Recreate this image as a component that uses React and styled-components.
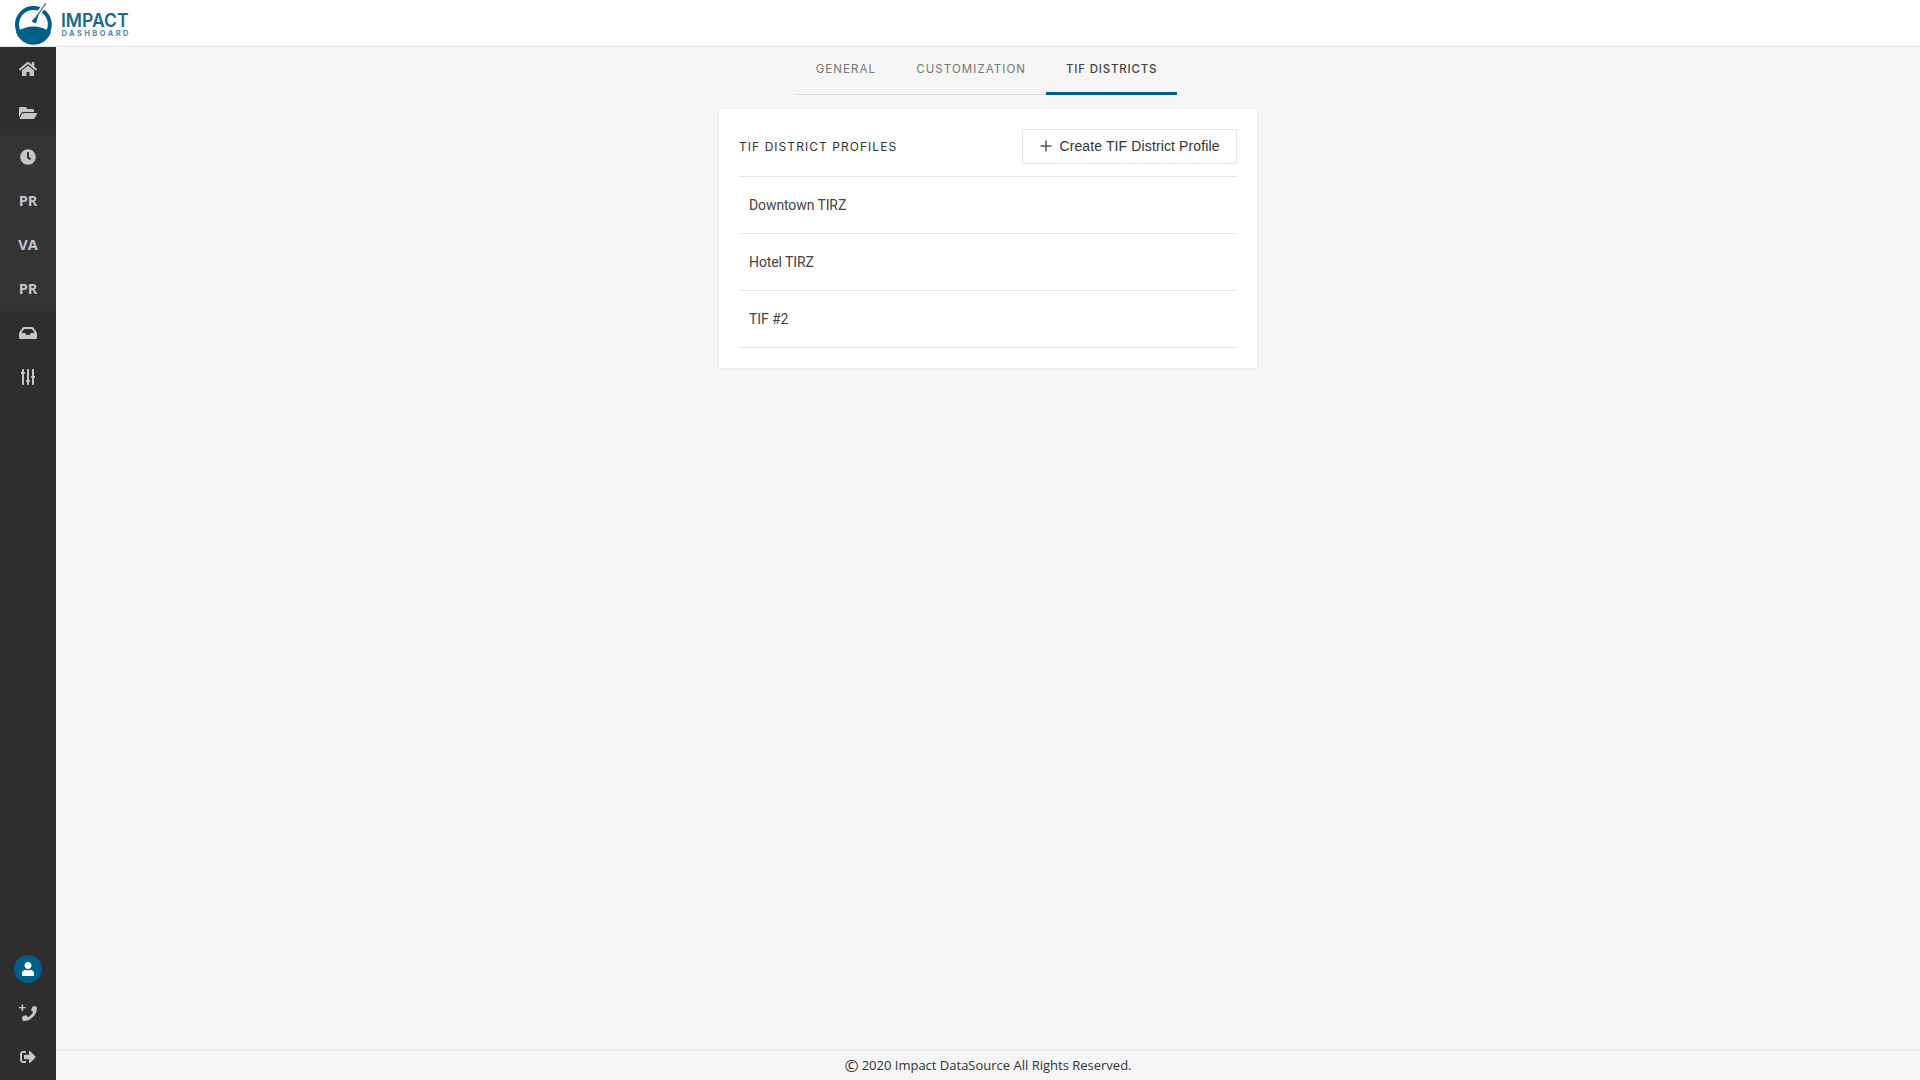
import React from "react";
import styled, { createGlobalStyle } from "styled-components";
import { FaHome, FaFolderOpen, FaClock, FaInbox, FaSlidersH, FaUser, FaPhoneAlt, FaSignOutAlt } from "react-icons/fa";

const GlobalStyle = createGlobalStyle`
  html, body {
    margin: 0;
    padding: 0;
    background: #f5f5f5;
  }
  * {
    box-sizing: border-box;
  }
`;

const Page = styled.div`
  width: 1920px;
  height: 1080px;
  display: flex;
  flex-direction: column;
  overflow: hidden;
`;

const Header = styled.header`
  height: 47px;
  flex-shrink: 0;
  background: #fff;
  border-bottom: 1px solid #e6e6e6;
  display: flex;
  align-items: flex-start;
`;

const LogoSvg = styled.svg`
  display: block;
`;

const Body = styled.div`
  flex: 1;
  display: flex;
  min-height: 0;
`;

const Sidebar = styled.nav`
  width: 56px;
  flex-shrink: 0;
  background: #2e2e2e;
  display: flex;
  flex-direction: column;
  justify-content: space-between;
  padding-bottom: 1px;
`;

const NavGroup = styled.div`
  display: flex;
  flex-direction: column;
`;

const Band = styled.div`
  display: flex;
  flex-direction: column;
  background: #343434;
`;

const NavItem = styled.div`
  height: 44px;
  display: flex;
  align-items: center;
  justify-content: center;
  color: #c5c5cb;
`;

const NavLabel = styled(NavItem)`
  padding-bottom: 2px;
  font-family: "Open Sans", sans-serif;
  font-weight: 700;
  font-size: 14.5px;
`;

const Avatar = styled.div`
  width: 28px;
  height: 28px;
  border-radius: 50%;
  background: #005f87;
  color: #fff;
  display: flex;
  align-items: center;
  justify-content: center;
`;

const PhoneIcon = styled.span`
  position: relative;
  display: flex;
  width: 17px;
  height: 17px;
  margin-top: -2px;
  align-items: flex-end;
  justify-content: flex-end;
`;

const PhoneGlyph = styled(FaPhoneAlt)`
  transform: scaleX(-1);
`;

const PhonePlus = styled.span`
  position: absolute;
  left: -1px;
  top: -1px;
  font-family: "Liberation Sans", sans-serif;
  font-size: 13px;
  line-height: 10px;
  font-weight: 700;
`;

const VerticalSliders = styled(FaSlidersH)`
  transform: rotate(90deg);
`;

const Main = styled.main`
  flex: 1;
  min-width: 0;
  display: flex;
  flex-direction: column;
  align-items: center;
`;

const Content = styled.div`
  flex: 1;
  display: flex;
  flex-direction: column;
  align-items: center;
`;

const Tabs = styled.div`
  display: flex;
  height: 48px;
  border-bottom: 1px solid #dcdcdc;
  margin-right: 3px;
`;

const Tab = styled.div`
  height: 48px;
  padding: 0 20px ${(p) => (p.$active ? "2px" : "4px")};
  display: flex;
  align-items: center;
  font-family: Inter, sans-serif;
  font-size: 11.5px;
  font-weight: ${(p) => (p.$active ? 500 : 400)};
  letter-spacing: ${(p) => (p.$active ? "0.8px" : "1.08px")};
  color: ${(p) => (p.$active ? "#444" : "#777")};
  border-bottom: ${(p) => (p.$active ? "3px solid #005f87" : "none")};
`;

const Card = styled.section`
  width: 540px;
  margin-top: 13px;
  padding: 20px;
  background: #fff;
  border: 1px solid #eee;
`;

const CardHeader = styled.div`
  display: flex;
  align-items: center;
  justify-content: space-between;
  padding-bottom: 12px;
  border-bottom: 1px solid #e6e6e6;
`;

const CardTitle = styled.h2`
  margin: 0;
  font-family: Inter, sans-serif;
  font-size: 12px;
  font-weight: 400;
  letter-spacing: 1.05px;
  color: #333;
`;

const CreateButton = styled.button`
  width: 215px;
  height: 35px;
  display: flex;
  align-items: center;
  justify-content: center;
  gap: 6px;
  padding: 0 0 1px;
  background: #fff;
  border: 1px solid #e6e6e6;
  border-radius: 2px;
  font-family: "Liberation Sans", sans-serif;
  font-size: 14px;
  letter-spacing: 0.12px;
  color: #333;
`;

const Row = styled.div`
  height: 57px;
  padding: 0 10px;
  display: flex;
  align-items: center;
  border-bottom: 1px solid #e6e6e6;
  font-family: Roboto, sans-serif;
  font-size: 14px;
  letter-spacing: -0.1px;
  color: #444;
`;

const Footer = styled.footer`
  width: 100%;
  height: 30px;
  flex-shrink: 0;
  display: flex;
  align-items: center;
  justify-content: center;
  gap: 3px;
  padding-bottom: 1px;
  border-top: 1px solid #e8e8e8;
  font-family: "Open Sans", sans-serif;
  font-size: 13px;
  color: #333;
`;

const Copy = styled.span`
  font-size: 17px;
  line-height: 1;
`;

function Logo() {
  return (
    <LogoSvg width="140" height="46" viewBox="0 0 140 46">
      <circle cx="33.4" cy="24.4" r="16.4" fill="none" stroke="#005f87" strokeWidth="4" />
      <path d="M16 32 Q33.4 21 51 32 A18.4 18.4 0 0 1 16 32 Z" fill="#005f87" />
      <path d="M46 3 L36 17" stroke="#fff" strokeWidth="4.5" />
      <path d="M46 3 L37 16" stroke="#5d8ea6" strokeWidth="1.5" />
      <path d="M39 13 L31.5 21.5 L36 23.5 Z" fill="#005f87" />
      <text x="61" y="27" fontFamily="Inter, sans-serif" fontSize="19" fontWeight="600" fill="#1b6a8c" textLength="67.5" lengthAdjust="spacingAndGlyphs">IMPACT</text>
      <text x="61.5" y="35.5" fontFamily="Inter, sans-serif" fontSize="7.5" fontWeight="700" fill="#4f88a2" textLength="67" lengthAdjust="spacing">DASHBOARD</text>
    </LogoSvg>
  );
}

const App = () => {
  return (
    <Page>
      <GlobalStyle />
      <Header>
        <Logo />
      </Header>
      <Body>
        <Sidebar>
          <NavGroup>
            <NavItem><FaHome size={18} /></NavItem>
            <NavItem><FaFolderOpen size={18} /></NavItem>
            <Band>
              <NavItem><FaClock size={16} /></NavItem>
              <NavLabel>PR</NavLabel>
              <NavLabel>VA</NavLabel>
              <NavLabel>PR</NavLabel>
            </Band>
            <NavItem><FaInbox size={18} /></NavItem>
            <NavItem><VerticalSliders size={16} /></NavItem>
          </NavGroup>
          <NavGroup>
            <NavItem>
              <Avatar><FaUser size={14} /></Avatar>
            </NavItem>
            <NavItem>
              <PhoneIcon>
                <PhonePlus>+</PhonePlus>
                <PhoneGlyph size={15} />
              </PhoneIcon>
            </NavItem>
            <NavItem><FaSignOutAlt size={16} /></NavItem>
          </NavGroup>
        </Sidebar>
        <Main>
          <Content>
            <Tabs>
              <Tab>GENERAL</Tab>
              <Tab>CUSTOMIZATION</Tab>
              <Tab $active>TIF DISTRICTS</Tab>
            </Tabs>
            <Card>
              <CardHeader>
                <CardTitle>TIF DISTRICT PROFILES</CardTitle>
                <CreateButton>
                  <svg width="14" height="14" viewBox="0 0 14 14">
                    <path d="M7 1.5v11M1.5 7h11" stroke="#555" strokeWidth="1.5" />
                  </svg>
                  Create TIF District Profile
                </CreateButton>
              </CardHeader>
              <Row>Downtown TIRZ</Row>
              <Row>Hotel TIRZ</Row>
              <Row>TIF #2</Row>
            </Card>
          </Content>
          <Footer>
            <Copy>©</Copy> 2020 Impact DataSource All Rights Reserved.
          </Footer>
        </Main>
      </Body>
    </Page>
  );
};

export default App;
